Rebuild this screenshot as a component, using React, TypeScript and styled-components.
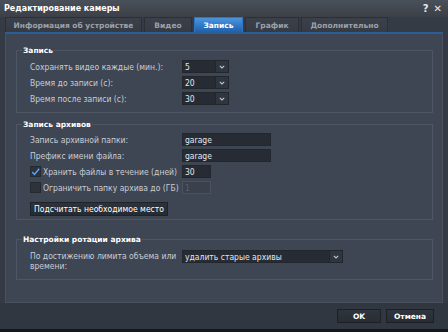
import React from 'react';
import styled, { createGlobalStyle } from 'styled-components';

const GlobalStyle = createGlobalStyle`
  html, body {
    margin: 0;
    padding: 0;
    background: #353b45;
  }
  * {
    box-sizing: border-box;
  }
`;

const Window = styled.div`
  width: 448px;
  height: 332px;
  display: flex;
  flex-direction: column;
  background: #353b45;
  font-family: 'DejaVu Sans Condensed', 'DejaVu Sans', Verdana, sans-serif;
  font-size: 8.5px;
  color: #c9cdd3;
  overflow: hidden;
`;

const TitleBar = styled.div`
  height: 17px;
  flex: none;
  display: flex;
  align-items: center;
  justify-content: space-between;
  padding: 0 6px 0 4px;
  background: linear-gradient(#4a5059, #3a3f48);
  color: #ffffff;
  font-family: 'DejaVu Sans', Verdana, sans-serif;
  font-weight: bold;
  font-size: 8px;
`;

const TitleTools = styled.div`
  display: flex;
  gap: 5px;
  font-size: 10px;
  color: #e6e8eb;
`;

const Body = styled.div`
  flex: 1;
  display: flex;
  flex-direction: column;
  padding: 0 5px;
`;

const TabBar = styled.div`
  display: flex;
  gap: 2px;
  height: 15px;
  flex: none;
`;

const Tab = styled.div<{ $active?: boolean; $w: number }>`
  width: ${({ $w }) => $w}px;
  display: flex;
  align-items: center;
  justify-content: center;
  font-family: 'DejaVu Sans', Verdana, sans-serif;
  font-weight: bold;
  font-size: 7.5px;
  border: 1px solid ${({ $active }) => ($active ? '#2f75c2' : '#2b3038')};
  border-bottom: none;
  background: ${({ $active }) =>
    $active ? 'linear-gradient(#4a95e0, #1f60ab)' : 'linear-gradient(#3b4049, #353a43)'};
  color: ${({ $active }) => ($active ? '#ffffff' : '#9ca2ab')};
`;

const Panel = styled.div`
  flex: 1;
  display: flex;
  flex-direction: column;
  gap: 7px;
  padding: 12px 9px 0 10px;
  background: #3e4553;
  border-top: 2px solid #2b5e99;
  border-left: 1px solid #4a5160;
  border-right: 1px solid #4a5160;
  border-bottom: 1px solid #4a5160;
`;

const Group = styled.fieldset<{ $top: number; $pad: number; $mt?: number }>`
  margin: ${({ $mt }) => $mt ?? 0}px 0 0 0;
  padding: ${({ $top }) => $top}px 0 ${({ $pad }) => $pad}px 5px;
  border: 1px solid #4e5564;
  min-width: 0;
  legend {
    padding: 0 1px;
    font-family: 'DejaVu Sans', Verdana, sans-serif;
    font-weight: bold;
    font-size: 7.5px;
    color: #ffffff;
  }
`;

const GroupBody = styled.div`
  display: flex;
  flex-direction: column;
  gap: 3px;
  padding-left: 8px;
`;

const Row = styled.div`
  display: flex;
  align-items: center;
  height: 13px;
`;

const Label = styled.div`
  width: 152px;
  flex: none;
  white-space: nowrap;
`;

const TallRow = styled.div`
  display: flex;
  align-items: flex-start;
  height: 22px;
`;

const MultiLabel = styled.div`
  width: 152px;
  flex: none;
  line-height: 10px;
  margin-top: 1px;
`;

const CheckLabel = styled.label`
  width: 152px;
  flex: none;
  display: flex;
  align-items: center;
  gap: 2px;
  white-space: nowrap;
`;

const Box = styled.span`
  width: 11px;
  height: 11px;
  flex: none;
  display: flex;
  align-items: center;
  justify-content: center;
  background: #2d323b;
  border: 1px solid #252930;
  overflow: visible;
`;

const Field = styled.div<{ $w: number; $off?: boolean }>`
  width: ${({ $w }) => $w}px;
  height: 13px;
  display: flex;
  align-items: center;
  padding-left: 2px;
  background: ${({ $off }) => ($off ? '#3a404c' : '#272c34')};
  border: 1px solid ${({ $off }) => ($off ? '#4b5160' : '#22262d')};
  color: ${({ $off }) => ($off ? '#59606b' : '#e4e6e9')};
`;

const Select = styled.div<{ $w: number }>`
  width: ${({ $w }) => $w}px;
  height: 13px;
  display: flex;
  background: #272c34;
  border: 1px solid #22262d;
  color: #e4e6e9;
`;

const SelectValue = styled.div`
  flex: 1;
  display: flex;
  align-items: center;
  padding-left: 2px;
`;

const SelectArrow = styled.div`
  width: 13px;
  display: flex;
  align-items: center;
  justify-content: center;
  background: #30363f;
  border-left: 1px solid #22262d;
`;

const ActionButton = styled.div`
  margin-top: 5px;
  width: 138px;
  height: 14px;
  display: flex;
  align-items: center;
  justify-content: center;
  background: linear-gradient(#2e333b, #262a31);
  border: 1px solid #1f2329;
  color: #ffffff;
`;

const Footer = styled.div`
  height: 29px;
  flex: none;
  display: flex;
  justify-content: flex-end;
  align-items: center;
  gap: 5px;
  padding: 0 14px 0 0;
  background: #313741;
  border-bottom: 3px solid #14171b;
`;

const FooterButton = styled.div<{ $w: number }>`
  width: ${({ $w }) => $w}px;
  height: 14px;
  display: flex;
  align-items: center;
  justify-content: center;
  background: linear-gradient(#30353d, #282c33);
  border: 1px solid #1d2026;
  color: #ffffff;
  font-family: 'DejaVu Sans', Verdana, sans-serif;
  font-weight: bold;
  font-size: 7.5px;
`;

const Chevron = () => (
  <svg width="6" height="4" viewBox="0 0 6 4">
    <path d="M0.8 0.8 L3 3 L5.2 0.8" fill="none" stroke="#b9c6d6" strokeWidth="1.1" />
  </svg>
);

const Check = () => (
  <svg width="11" height="10" viewBox="0 0 11 10">
    <path d="M1.5 5 L4.2 8 L10 1" fill="none" stroke="#5ba4f0" strokeWidth="1.8" />
  </svg>
);

const Dropdown = ({ w, value }: { w: number; value: string }) => (
  <Select $w={w}>
    <SelectValue>{value}</SelectValue>
    <SelectArrow>
      <Chevron />
    </SelectArrow>
  </Select>
);

const tabs = [
  { name: 'Информация об устройстве', w: 137 },
  { name: 'Видео', w: 48 },
  { name: 'Запись', w: 49, active: true },
  { name: 'График', w: 54 },
  { name: 'Дополнительно', w: 87 },
];

const App = () => (
  <>
    <GlobalStyle />
    <Window>
      <TitleBar>
        <span>Редактирование камеры</span>
        <TitleTools>
          <span>?</span>
          <span>✕</span>
        </TitleTools>
      </TitleBar>
      <Body>
        <TabBar>
          {tabs.map((t) => (
            <Tab key={t.name} $w={t.w} $active={t.active}>
              {t.name}
            </Tab>
          ))}
        </TabBar>
        <Panel>
          <Group $top={5} $pad={7}>
            <legend>Запись</legend>
            <GroupBody>
              <Row>
                <Label>Сохранять видео каждые (мин.):</Label>
                <Dropdown w={47} value="5" />
              </Row>
              <Row>
                <Label>Время до записи (с):</Label>
                <Dropdown w={47} value="20" />
              </Row>
              <Row>
                <Label>Время после записи (с):</Label>
                <Dropdown w={47} value="30" />
              </Row>
            </GroupBody>
          </Group>
          <Group $top={4} $pad={3}>
            <legend>Запись архивов</legend>
            <GroupBody>
              <Row>
                <Label>Запись архивной папки:</Label>
                <Field $w={89}>garage</Field>
              </Row>
              <Row>
                <Label>Префикс имени файла:</Label>
                <Field $w={89}>garage</Field>
              </Row>
              <Row>
                <CheckLabel>
                  <Box>
                    <Check />
                  </Box>
                  Хранить файлы в течение (дней)
                </CheckLabel>
                <Field $w={29}>30</Field>
              </Row>
              <Row>
                <CheckLabel>
                  <Box />
                  Ограничить папку архива до (ГБ)
                </CheckLabel>
                <Field $w={29} $off>
                  1
                </Field>
              </Row>
              <ActionButton>Подсчитать необходимое место</ActionButton>
            </GroupBody>
          </Group>
          <Group $top={6} $pad={7} $mt={8}>
            <legend>Настройки ротации архива</legend>
            <GroupBody>
              <TallRow>
                <MultiLabel>По достижению лимита объема или времени:</MultiLabel>
                <Dropdown w={161} value="удалить старые архивы" />
              </TallRow>
            </GroupBody>
          </Group>
        </Panel>
      </Body>
      <Footer>
        <FooterButton $w={44}>OK</FooterButton>
        <FooterButton $w={48}>Отмена</FooterButton>
      </Footer>
    </Window>
  </>
);

export default App;
